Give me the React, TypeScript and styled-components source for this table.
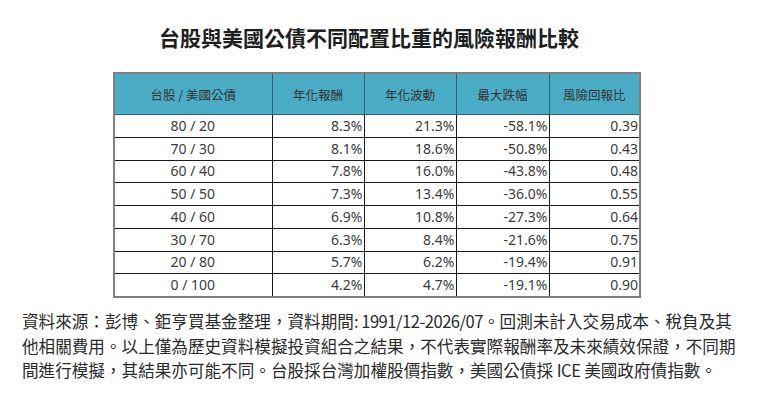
import React from 'react'
import styled, { createGlobalStyle } from 'styled-components'

const GlobalStyle = createGlobalStyle`
  html, body {
    margin: 0;
    padding: 0;
    background: #ffffff;
  }
  body {
    font-family: "Noto Sans", "Noto Sans CJK TC", sans-serif;
  }
`

type Row = {
  mix: string
  ret: string
  vol: string
  mdd: string
  ratio: string
}

const rows: Row[] = [
  { mix: '80 / 20', ret: '8.3%', vol: '21.3%', mdd: '-58.1%', ratio: '0.39' },
  { mix: '70 / 30', ret: '8.1%', vol: '18.6%', mdd: '-50.8%', ratio: '0.43' },
  { mix: '60 / 40', ret: '7.8%', vol: '16.0%', mdd: '-43.8%', ratio: '0.48' },
  { mix: '50 / 50', ret: '7.3%', vol: '13.4%', mdd: '-36.0%', ratio: '0.55' },
  { mix: '40 / 60', ret: '6.9%', vol: '10.8%', mdd: '-27.3%', ratio: '0.64' },
  { mix: '30 / 70', ret: '6.3%', vol: '8.4%', mdd: '-21.6%', ratio: '0.75' },
  { mix: '20 / 80', ret: '5.7%', vol: '6.2%', mdd: '-19.4%', ratio: '0.91' },
  { mix: '0 / 100', ret: '4.2%', vol: '4.7%', mdd: '-19.1%', ratio: '0.90' },
]

const columns = [
  { label: '台股 / 美國公債', width: 158 },
  { label: '年化報酬', width: 92 },
  { label: '年化波動', width: 92 },
  { label: '最大跌幅', width: 93 },
  { label: '風險回報比', width: 91 },
]

function App() {
  return (
    <>
      <GlobalStyle />
      <StyledPage>
        <Title>台股與美國公債不同配置比重的風險報酬比較</Title>
        <Table>
          <colgroup>
            {columns.map((c) => (
              <col key={c.label} style={{ width: c.width }} />
            ))}
          </colgroup>
          <thead>
            <tr>
              {columns.map((c) => (
                <HeadCell key={c.label}>{c.label}</HeadCell>
              ))}
            </tr>
          </thead>
          <tbody>
            {rows.map((r) => (
              <tr key={r.mix}>
                <Cell $align="center">{r.mix}</Cell>
                <Cell $align="right">{r.ret}</Cell>
                <Cell $align="right">{r.vol}</Cell>
                <Cell $align="right">{r.mdd}</Cell>
                <Cell $align="right">{r.ratio}</Cell>
              </tr>
            ))}
          </tbody>
        </Table>
        <Note>
          <NoteLine>
            資料來源：彭博、鉅亨買基金整理，資料期間<Latin>: 1991/12-2026/07</Latin>。回測未計入交易成本、稅負及其
          </NoteLine>
          <NoteLine>
            他相關費用。以上僅為歷史資料模擬投資組合之結果，不代表實際報酬率及未來績效保證，不同期
          </NoteLine>
          <NoteLine>
            間進行模擬，其結果亦可能不同。台股採台灣加權股價指數，美國公債採 <Latin>ICE</Latin> 美國政府債指數。
          </NoteLine>
        </Note>
      </StyledPage>
    </>
  )
}

export default App

const StyledPage = styled.div`
  width: 760px;
  height: 406px;
  display: flex;
  flex-direction: column;
  overflow: hidden;
`

const Title = styled.h1`
  margin: 25px 0 0;
  padding-right: 22px;
  text-align: center;
  font-family: "Noto Sans CJK TC", sans-serif;
  font-size: 21px;
  line-height: 24px;
  font-weight: 700;
  color: #1e1e1e;
`

const Table = styled.table`
  margin: 23px 0 0 113px;
  width: 526px;
  border-collapse: collapse;
  table-layout: fixed;
  border: 2px solid #808080;
`

const HeadCell = styled.th`
  height: 40px;
  padding: 0;
  background: #4bacc6;
  border: 1px solid #3a5f6a;
  color: #333333;
  font-family: "Noto Sans CJK TC", sans-serif;
  font-size: 12.5px;
  font-weight: 400;
  text-align: center;
  vertical-align: middle;
`

const Cell = styled.td<{ $align: 'center' | 'right' }>`
  height: 21.75px;
  padding: 0 1px 0 0;
  border: 1px solid #1a1a1a;
  color: #3c3c3c;
  font-family: "Noto Sans", "Noto Sans CJK TC", sans-serif;
  font-size: 14px;
  line-height: 16px;
  text-align: ${(p) => p.$align};
  vertical-align: middle;
`

const Note = styled.div`
  margin-top: 11px;
  padding-left: 22px;
  display: flex;
  flex-direction: column;
  font-family: "Noto Sans CJK TC", sans-serif;
  font-size: 16.6px;
  line-height: 24.5px;
  color: #2a2a2a;
`

const NoteLine = styled.div`
  white-space: nowrap;
`

const Latin = styled.span`
  letter-spacing: -0.5px;
`
